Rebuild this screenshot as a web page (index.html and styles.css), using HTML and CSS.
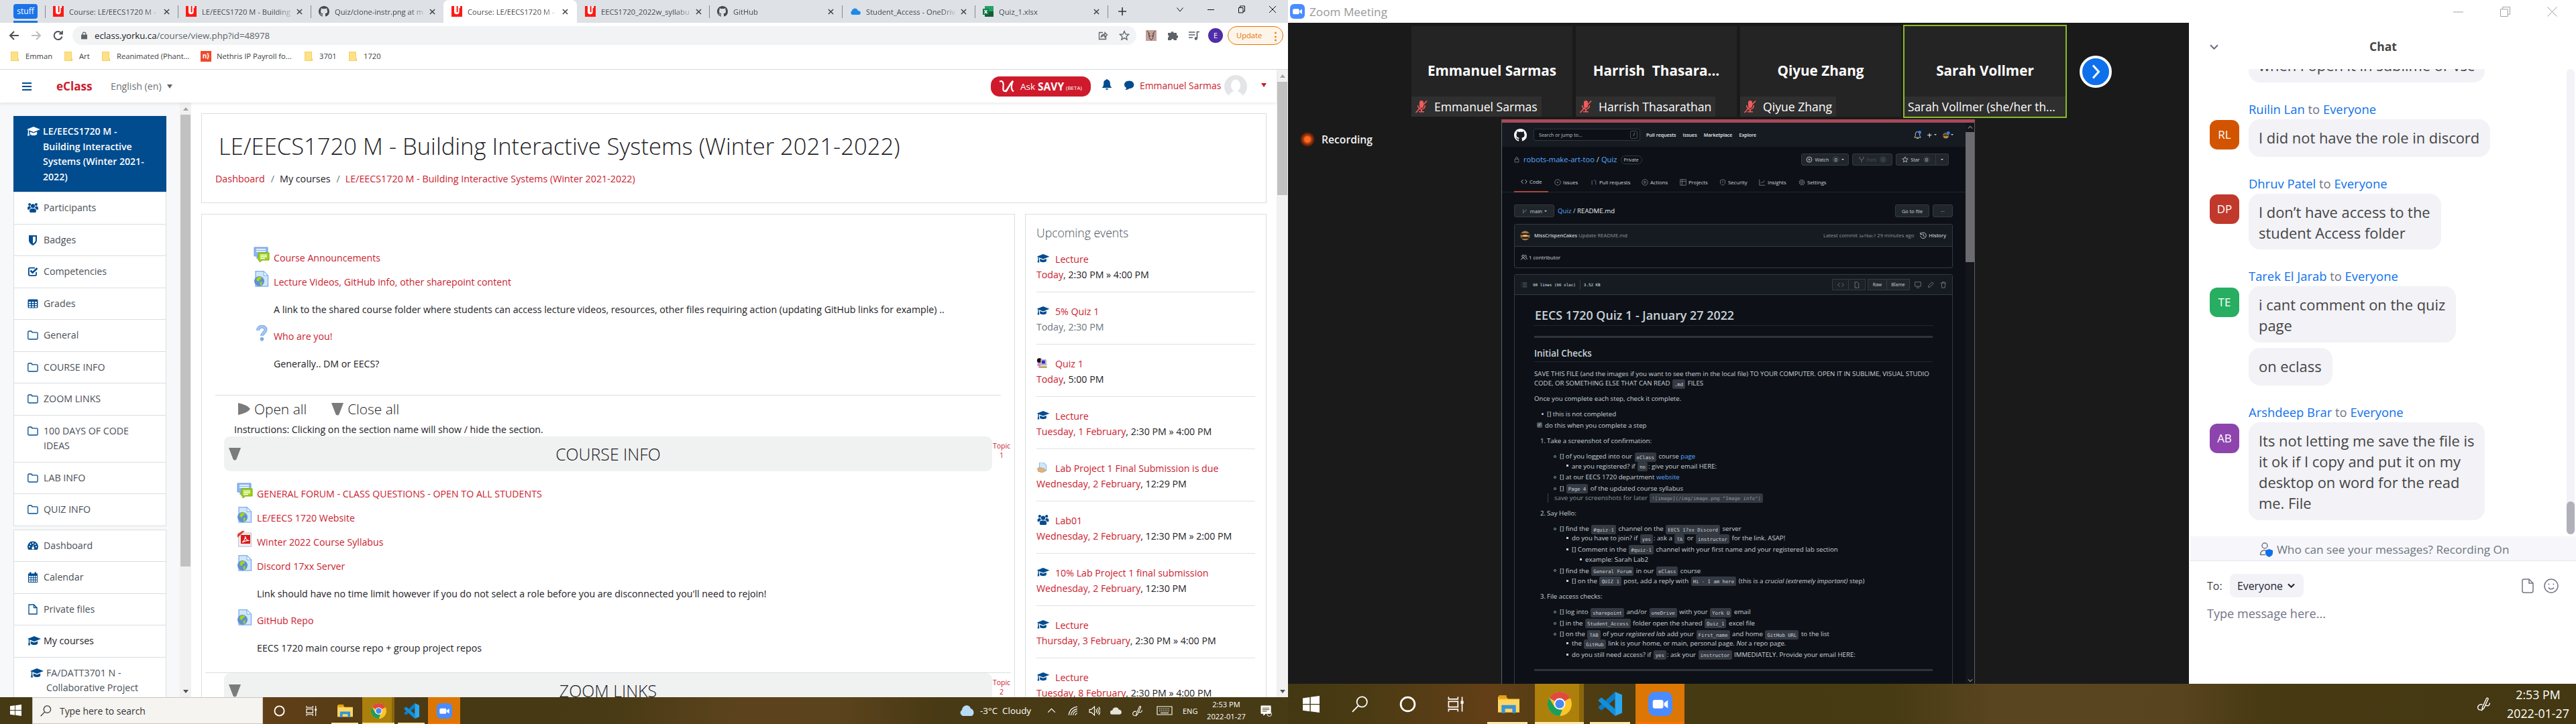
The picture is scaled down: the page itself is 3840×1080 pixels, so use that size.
FILE: index.html
```html
<!DOCTYPE html>
<html lang="en">
<head>
<meta charset="utf-8">
<title>Course: LE/EECS1720 M</title>
<link rel="stylesheet" href="styles.css">
</head>
<body>
<svg class="defs" aria-hidden="true">
  <symbol id="york" viewBox="0 0 16 16"><rect width="16" height="16" fill="#fb1b16"/><path d="M4 0v8.5a3.8 3.8 0 0 0 7.6 0V3H13V0H9.6v8.5a1 1 0 0 1-2 0V0z" fill="#fff"/></symbol>
  <symbol id="github" viewBox="0 0 16 16"><path fill="currentColor" d="M8 0C3.58 0 0 3.58 0 8c0 3.54 2.29 6.53 5.47 7.59.4.07.55-.17.55-.38 0-.19-.01-.82-.01-1.49-2.01.37-2.53-.49-2.69-.94-.09-.23-.48-.94-.82-1.13-.28-.15-.68-.52-.01-.53.63-.01 1.08.58 1.23.82.72 1.21 1.87.87 2.33.66.07-.52.28-.87.51-1.07-1.78-.2-3.64-.89-3.64-3.95 0-.87.31-1.59.82-2.15-.08-.2-.36-1.02.08-2.12 0 0 .67-.21 2.2.82a7.6 7.6 0 0 1 4 0c1.53-1.04 2.2-.82 2.2-.82.44 1.1.16 1.92.08 2.12.51.56.82 1.27.82 2.15 0 3.07-1.87 3.75-3.65 3.95.29.25.54.73.54 1.48 0 1.07-.01 1.93-.01 2.2 0 .21.15.46.55.38A8 8 0 0 0 16 8c0-4.42-3.58-8-8-8z"/></symbol>
  <symbol id="x" viewBox="0 0 10 10"><path d="M1 1l8 8M9 1L1 9" stroke="currentColor" stroke-width="1.6"/></symbol>
  <symbol id="folder" viewBox="0 0 12 14"><path d="M0 0h11v10l1 .5V14H0z" fill="#f3cf5b"/><path d="M.8.8h9.4v12.4H.8z" fill="#fee086"/></symbol>
  <symbol id="cap" viewBox="0 0 20 16"><path fill="currentColor" d="M10 1l10 4-10 4L3.2 6.3v3.2l.8 5H1l.8-5V5.7L0 5zM4.8 8.4L10 10.5l5.2-2.1v3.8c-1.5 2.4-8.9 2.4-10.4 0z"/></symbol>
  <symbol id="users" viewBox="0 0 18 16"><path fill="currentColor" d="M3.5 0a2.3 2.3 0 1 1 0 4.6 2.3 2.3 0 0 1 0-4.6zm11 0a2.3 2.3 0 1 1 0 4.6 2.3 2.3 0 0 1 0-4.6zM9 1.500a3.4 3.4 0 1 1 0 6.800A3.400 3.400 0 0 1 9 1.500zM0 8.500C0 6 1.500 5.200 4.500 5.300 4.800 7 5.500 8 6 8.500 4 8.500 3 10 3 11H1C.3 11 0 10.500 0 9.500zm18 0c0-2.500-1.500-3.300-4.500-3.200C13.200 7 12.500 8 12 8.500c2 0 3 1.500 3 2.500h2c.7 0 1-.5 1-1.500zM3.500 13c0-3 1.500-4 5.500-4s5.500 1 5.500 4c0 2-.5 3-2 3h-7c-1.500 0-2-1-2-3z"/></symbol>
  <symbol id="shield" viewBox="0 0 16 16"><path fill="currentColor" fill-rule="evenodd" d="M2 1h12v7c0 4-3 6.500-6 8-3-1.500-6-4-6-8zm6 2v10.500c2-1.200 4-3 4-5.500V3z"/></symbol>
  <symbol id="check" viewBox="0 0 16 16"><path fill="none" stroke="currentColor" stroke-width="1.800" d="M13 9v3.500c0 1-.7 1.600-1.600 1.600H3.500c-.9 0-1.600-.7-1.600-1.600V4.200c0-1 .7-1.600 1.600-1.600H11"/><path fill="none" stroke="currentColor" stroke-width="2.600" d="M4.500 6.500l3 3.200L14.500 3"/></symbol>
  <symbol id="table" viewBox="0 0 16 16"><path fill="currentColor" fill-rule="evenodd" d="M2 1.500h12a1.500 1.500 0 0 1 1.500 1.500v10a1.500 1.500 0 0 1-1.500 1.500H2A1.500 1.500 0 0 1 .5 13V3A1.500 1.500 0 0 1 2 1.500zM2 5v2h3V5zm4.500 0v2h3V5zM11 5v2h3V5zM2 8.200v2h3v-2zm4.500 0v2h3v-2zm4.500 0v2h3v-2zM2 11.400v2h3v-2zm4.500 0v2h3v-2zm4.500 0v2h3v-2z"/></symbol>
  <symbol id="fold" viewBox="0 0 16 16"><path fill="none" stroke="currentColor" stroke-width="1.300" d="M.8 3.500c0-1 .5-1.500 1.500-1.500h3c1 0 1.500.6 1.500 1.800h6.700c1 0 1.600.6 1.600 1.600v7c0 1-.6 1.600-1.600 1.600H2.300c-1 0-1.500-.6-1.500-1.600z"/></symbol>
  <symbol id="gauge" viewBox="0 0 16 16"><path fill="currentColor" d="M8 1.500A8 8 0 0 0 1.500 14h13A8 8 0 0 0 8 1.500z"/><g fill="#fff"><circle cx="3" cy="9.500" r="1.100"/><circle cx="4.600" cy="5.800" r="1.100"/><circle cx="8" cy="4.200" r="1.100"/><circle cx="11.400" cy="5.800" r="1.100"/><circle cx="13" cy="9.500" r="1.100"/><path d="M8.500 5.800L9 10a1.800 1.800 0 1 1-1.500 0z"/></g></symbol>
  <symbol id="cal" viewBox="0 0 16 16"><path fill="currentColor" fill-rule="evenodd" d="M1 2.500h2V.5h2.500v2h5v-2H13v2h2V16H1zM2.200 6v2.200h2.500V6zm3.500 0v2.200H8V6zM9 6v2.200h2V6zm3 0v2.200h2V6zM2.200 9.200v2.200h2.500V9.200zm3.500 0v2.200H8V9.200zm3.300 0v2.200h2V9.200zm3 0v2.200h2V9.200zm-9.800 3.200V15h2.500v-2.600zm3.500 0V15H8v-2.600zm3.300 0V15h2v-2.600zm3 0V15h2v-2.600z"/></symbol>
  <symbol id="file" viewBox="0 0 16 16"><path fill="none" stroke="currentColor" stroke-width="1.300" d="M2 1h7.500L14 5.500V15H2zM9.500 1v4.500H14"/></symbol>
  <symbol id="forum" viewBox="0 0 24 24"><path d="M1 1h20v13H8l-3 4v-4H1z" fill="#8db7f0" stroke="#6d9be0"/><path d="M4 4h14M4 7h14" stroke="#fff" stroke-width="1.500"/><path d="M7 9h16v11H13l-4 3v-3H7z" fill="#a2d314" stroke="#78ab0a"/><path d="M10 12.500h10M10 15h10M10 17.500h7" stroke="#fff" stroke-width="1.300"/></symbol>
  <symbol id="url" viewBox="0 0 24 24"><path d="M3 .7h12l6.500 6.500v16H3z" fill="#cfe6fb" stroke="#7daeea" stroke-width="1.300"/><path d="M15 .7v6.500h6.500z" fill="#eef7ff" stroke="#7daeea"/><circle cx="8.500" cy="15.500" r="7.500" fill="#5f8fd4"/><path d="M6 9.500l5-1 1 3-3 2-2 3-3-3zM9.500 17l3.500-1-1 5-2 1z" fill="#a4d514"/></symbol>
  <symbol id="pdf" viewBox="0 0 24 24"><path d="M2.500 3h19v20.500h-19z" fill="#ececef" stroke="#c4c4ca"/><path d="M6 6h14v13H6z" fill="#d91b1b"/><path d="M1 5l7-5h4L1 10z" fill="#e33b2c"/><path d="M8 17c3-2 5-6 4.500-9 1 5 3 6.500 6 6.500-4-.5-7 .3-10.500 2.500z" fill="none" stroke="#fff" stroke-width="1.100"/></symbol>
  <symbol id="choice" viewBox="0 0 24 24"><path d="M6.500 8C6.500 .5 18 .5 18 7c0 4-5.500 5-5.500 9" fill="none" stroke="#7fa9ea" stroke-width="5"/><path d="M6.500 8C6.500 .5 18 .5 18 7c0 4-5.500 5-5.500 9" fill="none" stroke="#a9caf6" stroke-width="2.500"/><circle cx="12.500" cy="20.800" r="2.800" fill="#7fa9ea"/></symbol>
  <symbol id="tri-d" viewBox="0 0 20 20"><path d="M1 1h18l-6.500 17q-2.500 3-5 0z" fill="#7b7b7b"/></symbol>
  <symbol id="tri-r" viewBox="0 0 20 20"><path d="M1 1q14 3 18 9-4 6-18 9z" fill="#7b7b7b"/></symbol>
  <symbol id="win" viewBox="0 0 18 18"><path fill="#fff" d="M0 2.500L7.500 1.400v7.200H0zM8.500 1.300L18 0v8.600H8.500zM0 9.600h7.500v7.200L0 15.700zM8.500 9.600H18V18l-9.500-1.300z"/></symbol>
  <symbol id="mag" viewBox="0 0 18 18"><circle cx="11" cy="6.500" r="5.500" fill="none" stroke="currentColor" stroke-width="1.300"/><path d="M7.200 10.500L.7 17.200" stroke="currentColor" stroke-width="1.300"/></symbol>
  <symbol id="ring" viewBox="0 0 18 18"><circle cx="9" cy="9" r="7.500" fill="none" stroke="#fff" stroke-width="2"/></symbol>
  <symbol id="tv" viewBox="0 0 18 18"><path fill="none" stroke="#fff" stroke-width="1.200" d="M1 1v2.500h10V1M1 17v-2.500h10V17M1 6h10v6H1zM15.500 1v16"/><path d="M14 5.500h3v3h-3z" fill="#fff"/></symbol>
  <symbol id="explorer" viewBox="0 0 24 20"><path d="M0 1.500h9L11 4h13v15H0z" fill="#f9c936"/><path d="M1 0h8.500v4H1z" fill="#e6a117"/><path d="M0 5h24v14H0z" fill="#fdd663"/><path d="M4 11h16v9h-4v-5H8v5H4z" fill="#3693d8"/></symbol>
  <symbol id="chrome" viewBox="0 0 24 24"><circle cx="12" cy="12" r="12" fill="#f9c52d"/><path d="M12 12L1.600 6A12 12 0 0 1 22.400 6z" fill="#de4b3e"/><path d="M12 24A12 12 0 0 1 1.600 6l5.200 9L12 17.400l2.500 1z" fill="#1d9d5a"/><path d="M12 6.600h10.700L22.400 6 12 5z" fill="#de4b3e"/><circle cx="12" cy="12" r="5.600" fill="#fff"/><circle cx="12" cy="12" r="4.400" fill="#4a89f3"/></symbol>
  <symbol id="code" viewBox="0 0 24 24"><path d="M17 0l7 3v18l-7 3z" fill="#2aa9f2"/><path d="M17 0v7L3.500 18.500.5 16V15z" fill="#0b7dc8"/><path d="M17 24v-7L3.500 5.500.5 8v1z" fill="#108fdb"/></symbol>
  <symbol id="zoom" viewBox="0 0 24 24"><rect width="24" height="24" rx="6.500" fill="#4a8cff"/><rect x="4.500" y="8" width="10.500" height="8.500" rx="2" fill="#fff"/><path d="M15.800 11l3.700-2.700v8l-3.700-2.700z" fill="#fff"/></symbol>
  <symbol id="pen" viewBox="0 0 20 22"><path fill="none" stroke="#fff" stroke-width="1.400" d="M8 16l6-13c.8-1.600 3.300-.6 2.500 1L10.500 17 7.500 20zM8 12c-5-1-8 3-6.500 6 1 2.500 5 2 5 2M13 13c3 2 6 0 6-3.500"/></symbol>
  <symbol id="mic" viewBox="0 0 20 20"><g fill="#f15b5b"><rect x="7" y="1" width="6" height="11" rx="3"/><path d="M4 8h1.500c0 7 9 7 9 0H16c0 4-2 6-5 6.500V17h3v1.500H6V17h3v-2.500C6 14 4 12 4 8z"/></g><path d="M1.500 19L18 1.500" stroke="#f15b5b" stroke-width="1.800"/></symbol>
</svg>

<section class="screen">
  <div class="tabs">
    <div class="group"><span>stuff</span></div>
    <div class="tab"><svg><use href="#york"/></svg><b>Course: LE/EECS1720 M -</b><svg class="cl"><use href="#x"/></svg></div>
    <div class="tab"><svg><use href="#york"/></svg><b>LE/EECS1720 M - Building</b><svg class="cl"><use href="#x"/></svg></div>
    <div class="tab"><svg><use href="#github"/></svg><b>Quiz/clone-instr.png at m</b><svg class="cl"><use href="#x"/></svg></div>
    <div class="tab on"><svg><use href="#york"/></svg><b>Course: LE/EECS1720 M -</b><svg class="cl"><use href="#x"/></svg></div>
    <div class="tab first"><svg><use href="#york"/></svg><b>EECS1720_2022w_syllabu</b><svg class="cl"><use href="#x"/></svg></div>
    <div class="tab"><svg><use href="#github"/></svg><b>GitHub</b><svg class="cl"><use href="#x"/></svg></div>
    <div class="tab"><svg viewBox="0 0 16 16"><path d="M3 13a3.500 3.500 0 0 1 0-6c1-4 7-5 9 0 5 0 5 6 1 6z" fill="#1a8be8"/></svg><b>Student_Access - OneDriv</b><svg class="cl"><use href="#x"/></svg></div>
    <div class="tab"><svg viewBox="0 0 16 16"><path d="M3 0h13v16H3z" fill="#21a366"/><path d="M9 8h7v8H3v-4z" fill="#185c37"/><path d="M0 4h9v9H0z" fill="#107c41"/><path d="M2.500 6l4 5M6.500 6l-4 5" stroke="#fff" stroke-width="1.400"/></svg><b>Quiz_1.xlsx</b><svg class="cl"><use href="#x"/></svg></div>
    <div class="tabend"><svg viewBox="0 0 12 12"><path d="M6 0v12M0 6h12" stroke="#333" stroke-width="1.600"/></svg></div>
    <div class="winbtns">
      <svg viewBox="0 0 12 12"><path d="M1.500 3.500L6 9l4.500-5.500"/></svg>
      <svg viewBox="0 0 12 12"><path d="M1 6.500h10"/></svg>
      <svg viewBox="0 0 12 12"><path d="M1.500 3.500h6.500v7.500H1.500zM3.500 3.500v-2.500h7v8H8"/></svg>
      <svg viewBox="0 0 12 12"><path d="M1 1l10 10M11 1L1 11"/></svg>
    </div>
  </div>
  <div class="address">
    <svg class="nv" viewBox="0 0 16 16"><path d="M15 8H2M8 2L2 8l6 6" /></svg>
    <svg class="nv dim" viewBox="0 0 16 16"><path d="M1 8h13M8 2l6 6-6 6"/></svg>
    <svg class="nv" viewBox="0 0 16 16"><path d="M13.500 9.500A6 6 0 1 1 12.500 4.500M13.800 1v4.500H9.300"/></svg>
    <div class="url"><svg class="lock" viewBox="0 0 10 12"><path d="M0 4.500h10V12H0z" fill="#5f6368"/><path d="M2.500 5V3a2.500 2.500 0 0 1 5 0v2" fill="none" stroke="#5f6368" stroke-width="1.400"/></svg><span>eclass.yorku.ca<i>/course/view.php?id=48978</i></span>
      <svg class="ui" viewBox="0 0 16 16"><path d="M8 3.500H2.500v10h10V9M5.500 10C6 7 8 6 11 6V3.500L14.500 7 11 10.500V8c-2.500 0-4 .5-5.500 2z"/></svg>
      <svg class="ui" viewBox="0 0 16 16"><path d="M8 1.500l1.900 4.400 4.700.4-3.600 3.100 1.100 4.700L8 11.600l-4.100 2.500L5 9.400 1.400 6.300l4.700-.4z"/></svg>
    </div>
    <div class="ext">
      <svg viewBox="0 0 16 16"><path fill="#c4a09a" d="M0 0h16v16H0z"/><path d="M2 1l4 5M14 1l-4 5M4 4l1.500 8L8 15l2.500-3L12 4" fill="none" stroke="#53403c"/><path d="M5 8l2 1M11 8L9 9" stroke="#222"/></svg>
      <svg viewBox="0 0 16 16"><path fill="#5f6368" d="M1 4h4.500a2 2 0 1 1 4 0H14v4a2 2 0 1 1 0 3.500V15H9.800a1.900 1.900 0 0 0-3.800 0H1v-4a2 2 0 0 0 0-3.800z"/></svg>
      <svg viewBox="0 0 16 16"><path fill="none" stroke="#5f6368" stroke-width="1.700" d="M0 3h9.500M0 7h9.500M0 11h6M16 2.500h-3.500V12"/><circle cx="10.800" cy="12.500" r="2.200" fill="#5f6368"/></svg>
      <span class="ava">E</span><span class="upd">Update<i>⋮</i></span>
    </div>
  </div>
  <div class="marks">
    <span class="m1"><svg><use href="#folder"/></svg>Emman</span><span class="m2"><svg><use href="#folder"/></svg>Art</span><span class="m3"><svg><use href="#folder"/></svg>Reanimated (Phant...</span><span class="m4"><em>n}</em>Nethris IP Payroll fo...</span><span class="m5"><svg><use href="#folder"/></svg>3701</span><span class="m5"><svg><use href="#folder"/></svg>1720</span>
  </div>
  <div class="web">
    <div class="page">
      <header class="nav">
        <i class="burger"></i><strong>eClass</strong><span class="lang">English (en)</span><i class="caret"></i>
        <div class="savy"><svg viewBox="0 0 28 22"><path d="M2 3c5-3 7 3 6 8-1 6 1 9 4 7 4-3 8-14 12-16M12 20C16 15 18 8 24 2c-4 8-3 15 1 17" fill="none" stroke="#fff" stroke-width="2.400"/></svg><span>Ask</span><b>SAVY</b><small>(BETA)</small></div>
        <svg class="bell" viewBox="0 0 16 16"><path fill="currentColor" d="M8 0c.7 0 1 .5 1 1.100 3 .6 3.800 3 3.800 5.400 0 3 .7 5 2.700 6.500H.5c2-1.500 2.700-3.500 2.700-6.500C3.200 4.100 4 1.700 7 1.100 7 .5 7.300 0 8 0zM6 14h4c0 2.500-4 2.500-4 0z"/></svg>
        <svg class="bub" viewBox="0 0 16 16"><path fill="currentColor" d="M8 1.500c9 0 10.500 12 0 12.300C6 15.300 4 16 1.500 16c1.200-1 1.600-2 1.700-3.200C-2.500 9.500-.5 1.500 8 1.500z"/></svg>
        <span class="who">Emmanuel Sarmas</span>
        <svg class="user" viewBox="0 0 34 34"><circle cx="17" cy="17" r="17" fill="#e4e5e6"/><ellipse cx="17" cy="15.500" rx="7" ry="9" fill="#fff"/><path d="M6 34c1-7 5-9 11-11 6 2 10 4 11 11z" fill="#fff"/></svg>
        <i class="caret red"></i>
      </header>
      <div class="cols">
        <nav class="drawer">
          <ul class="list">
            <li class="cur"><svg><use href="#cap"/></svg><span>LE/EECS1720 M -<br>Building Interactive<br>Systems (Winter 2021-<br>2022)</span></li>
            <li><svg><use href="#users"/></svg><span>Participants</span></li>
            <li><svg><use href="#shield"/></svg><span>Badges</span></li>
            <li><svg><use href="#check"/></svg><span>Competencies</span></li>
            <li><svg><use href="#table"/></svg><span>Grades</span></li>
            <li><svg><use href="#fold"/></svg><span>General</span></li>
            <li><svg><use href="#fold"/></svg><span>COURSE INFO</span></li>
            <li><svg><use href="#fold"/></svg><span>ZOOM LINKS</span></li>
            <li><svg><use href="#fold"/></svg><span>100 DAYS OF CODE<br>IDEAS</span></li>
            <li><svg><use href="#fold"/></svg><span>LAB INFO</span></li>
            <li><svg><use href="#fold"/></svg><span>QUIZ INFO</span></li>
          </ul>
          <ul class="list">
            <li><svg><use href="#gauge"/></svg><span>Dashboard</span></li>
            <li><svg><use href="#cal"/></svg><span>Calendar</span></li>
            <li><svg><use href="#file"/></svg><span>Private files</span></li>
            <li class="dark"><svg class="w"><use href="#cap"/></svg><span>My courses</span></li>
            <li class="sub"><svg class="w"><use href="#cap"/></svg><span>FA/DATT3701 N -<br>Collaborative Project</span></li>
          </ul>
        </nav>
        <div class="sb"><i class="up"></i><b style="height:674px"></b><i class="dn"></i></div>
        <main>
          <div class="card head">
            <h1>LE/EECS1720 M - Building Interactive Systems (Winter 2021-2022)</h1>
            <p><a>Dashboard</a><i>/</i>My courses<i>/</i><a>LE/EECS1720 M - Building Interactive Systems (Winter 2021-2022)</a></p>
          </div>
          <div class="row">
            <div class="card course">
              <div class="acts top">
                <div class="act"><svg><use href="#forum"/></svg><a>Course Announcements</a></div>
                <div class="act"><svg><use href="#url"/></svg><a>Lecture Videos, GitHub info, other sharepoint content</a></div>
                <p>A link to the shared course folder where students can access lecture videos, resources, other files requiring action (updating GitHub links for example) ..</p>
                <div class="act"><svg><use href="#choice"/></svg><a>Who are you!</a></div>
                <p>Generally.. DM or EECS?</p>
              </div>
              <hr>
              <div class="toggle"><svg><use href="#tri-r"/></svg><span>Open all</span><svg><use href="#tri-d"/></svg><span>Close all</span></div>
              <div class="instr">Instructions: Clicking on the section name will show / hide the section.</div>
              <div class="topic"><div class="bar"><svg><use href="#tri-d"/></svg><h3>COURSE INFO</h3></div><span>Topic<br>1</span></div>
              <div class="acts">
                <div class="act"><svg><use href="#forum"/></svg><a>GENERAL FORUM - CLASS QUESTIONS - OPEN TO ALL STUDENTS</a></div>
                <div class="act"><svg><use href="#url"/></svg><a>LE/EECS 1720 Website</a></div>
                <div class="act"><svg><use href="#pdf"/></svg><a>Winter 2022 Course Syllabus</a></div>
                <div class="act"><svg><use href="#url"/></svg><a>Discord 17xx Server</a></div>
                <p>Link should have no time limit however if you do not select a role before you are disconnected you'll need to rejoin!</p>
                <div class="act"><svg><use href="#url"/></svg><a>GitHub Repo</a></div>
                <p>EECS 1720 main course repo + group project repos</p>
              </div>
              <hr class="wide">
              <div class="topic"><div class="bar"><svg><use href="#tri-d"/></svg><h3>ZOOM LINKS</h3></div><span>Topic<br>2</span></div>
            </div>
            <aside class="card events">
              <h5>Upcoming events</h5>
              <div class="ev"><svg><use href="#cap"/></svg><a>Lecture</a><p><a>Today</a>, 2:30 PM » 4:00 PM</p></div>
              <div class="ev gray"><svg><use href="#cap"/></svg><a>5% Quiz 1</a><p>Today, 2:30 PM</p></div>
              <div class="ev"><svg viewBox="0 0 20 16"><circle cx="4" cy="4" r="3.800" fill="#111"/><path d="M6 2h9l1 10H6z" fill="#b9b9b9"/><path d="M8 4h5v5H8z" fill="#2a2ad8"/><path d="M1 8h5v5H1z" fill="#e07be8"/><path d="M3 13h13v3H3z" fill="#b7ab6a"/></svg><a>Quiz 1</a><p><a>Today</a>, 5:00 PM</p></div>
              <div class="ev"><svg><use href="#cap"/></svg><a>Lecture</a><p><a>Tuesday, 1 February</a>, 2:30 PM » 4:00 PM</p></div>
              <div class="ev"><svg viewBox="0 0 20 16"><path d="M4 0h7l4 4v9H4z" fill="#cfe6fb" stroke="#7daeea"/><path d="M1 9l4-1 7 2 2 3-5 3-7-2z" fill="#e5b27c" stroke="#ab7a48" stroke-width=".6"/></svg><a>Lab Project 1 Final Submission is due</a><p><a>Wednesday, 2 February</a>, 12:29 PM</p></div>
              <div class="ev"><svg><use href="#users"/></svg><a>Lab01</a><p><a>Wednesday, 2 February</a>, 12:30 PM » 2:00 PM</p></div>
              <div class="ev"><svg><use href="#cap"/></svg><a>10% Lab Project 1 final submission</a><p><a>Wednesday, 2 February</a>, 12:30 PM</p></div>
              <div class="ev"><svg><use href="#cap"/></svg><a>Lecture</a><p><a>Thursday, 3 February</a>, 2:30 PM » 4:00 PM</p></div>
              <div class="ev"><svg><use href="#cap"/></svg><a>Lecture</a><p><a>Tuesday, 8 February</a>, 2:30 PM » 4:00 PM</p></div>
            </aside>
          </div>
        </main>
      </div>
    </div>
    <div class="sb"><i class="up"></i><b style="height:169px"></b><i class="dn"></i></div>
  </div>
  <footer class="bar1">
    <span class="st"><svg><use href="#win"/></svg></span>
    <div class="search"><svg><use href="#mag"/></svg>Type here to search</div>
    <span class="t"><svg><use href="#ring"/></svg></span><span class="t"><svg><use href="#tv"/></svg></span>
    <span class="t run exp"><svg class="big"><use href="#explorer"/></svg></span><span class="t run chr"><svg class="big"><use href="#chrome"/></svg></span><span class="t run"><svg class="big"><use href="#code"/></svg></span><span class="t run zm"><svg class="big"><use href="#zoom"/></svg></span>
    <div class="tray">
      <svg class="wx" viewBox="0 0 22 16"><path d="M5 16a5 5 0 0 1-1-9C5-1 15-2 17 5c6 1 6 11 0 11z" fill="#b7dcf5"/></svg><span class="wt">-3°C&nbsp; Cloudy</span>
      <svg viewBox="0 0 16 16"><path d="M3 10l5-5 5 5"/></svg>
      <svg viewBox="0 0 16 16"><path d="M2 14C3 7 7 3 14 2M5 14c1-5 4-8 9-9M8 14c.5-3.500 3-5.500 6-6M11 14c.5-1.500 1.500-2.500 3-3"/></svg>
      <svg viewBox="0 0 16 16"><path d="M1 6h2.500L8 2v12l-4.500-4H1zM10 5.500q2 2.500 0 5M12 4q3 4 0 8M14 2.500q4 5.500 0 11"/></svg>
      <svg viewBox="0 0 16 16"><path d="M3 13a3 3 0 0 1 0-6c1-5 8-5 9-1 5 0 5 7 1 7z" fill="#e6e3da" stroke="none"/></svg>
      <svg viewBox="0 0 20 22"><use href="#pen"/></svg>
      <svg class="kb" viewBox="0 0 24 14"><path d="M1 1h22v12H1z"/><path d="M4 4.500h16M4 7.500h16" stroke-dasharray="1.500 1.200"/><path d="M6 10.500h12" /></svg>
      <span class="eng">ENG</span><div class="clock">2:53 PM<br>2022-01-27</div>
      <svg class="nt" viewBox="0 0 18 18"><path d="M1 1h15v12H8l-3 3v-3H1z" fill="#fff"/><path d="M3 4.500h11M3 7h11M3 9.500h7" stroke="#4a3d17"/><circle cx="14" cy="14" r="3.500"/></svg>
    </div>
  </footer>
</section>

<section class="screen">
  <div class="ztitle"><svg><use href="#zoom"/></svg><span>Zoom Meeting</span>
    <div class="zw"><svg viewBox="0 0 16 16"><path d="M0 8.500h16"/></svg><svg viewBox="0 0 16 16"><path d="M.5 4h11.500v11.500H.5zM4 4V.5h11.500V12H12"/></svg><svg viewBox="0 0 16 16"><path d="M.5.5l15 15M15.500.5l-15 15"/></svg></div>
  </div>
  <div class="zbody">
    <div class="meeting">
      <div class="strip">
        <div class="tile"><b>Emmanuel Sarmas</b><span><svg><use href="#mic"/></svg>Emmanuel Sarmas</span></div>
        <div class="tile"><b>Harrish&nbsp; Thasara...</b><span><svg><use href="#mic"/></svg>Harrish Thasarathan</span></div>
        <div class="tile"><b>Qiyue Zhang</b><span><svg><use href="#mic"/></svg>Qiyue Zhang</span></div>
        <div class="tile act-t"><b>Sarah Vollmer</b><span class="full">Sarah Vollmer (she/her th...</span></div>
        <div class="next"><svg viewBox="0 0 48 48"><circle cx="24" cy="24" r="22" fill="#0e71eb" stroke="#fff" stroke-width="4"/><path d="M20 14.500l8.500 9.500-8.500 9.500" fill="none" stroke="#fff" stroke-width="3"/></svg></div>
      </div>
      <div class="stage">
        <div class="rec"><i></i>Recording</div>
        <div class="share">
          <div class="gh">
            <div class="ghh"><svg class="oc"><use href="#github"/></svg><span class="gs">Search or jump to...<kbd>/</kbd></span><b>Pull requests</b><b>Issues</b><b>Marketplace</b><b>Explore</b>
              <div class="ghr"><svg viewBox="0 0 12 14"><path d="M1 11h10L9.500 8V5a3.500 3.500 0 0 0-7 0v3zM4.500 12.500h3" fill="none" stroke="#d0d4da"/><circle cx="9.500" cy="2.500" r="2.500" fill="#2f81f7"/></svg><span>+</span><u></u><svg viewBox="0 0 14 14"><circle cx="6" cy="8" r="5.500" fill="#b98b4e"/><path d="M1 8h10M3 5h6" stroke="#3a2814" stroke-width="2"/><circle cx="10.500" cy="3" r="3" fill="#2f81f7"/></svg><u></u></div></div>
            <div class="repo"><svg class="i8" viewBox="0 0 12 14"><path d="M2 6h8v6.500H2zM4 6V4a2 2 0 0 1 4 0v2"/></svg><span class="rn"><a>robots-make-art-too</a> / <a>Quiz</a></span><em>Private</em>
              <div class="rb"><span class="gb w1"><svg class="i8 lt" viewBox="0 0 14 14"><circle cx="7" cy="7" r="5.500"/><circle cx="7" cy="7" r="1.500"/></svg>Watch<s>0</s><u></u></span><span class="gb w2"><svg class="i8" viewBox="0 0 14 14"><path d="M3 1v4l4 3 4-3V1M7 8v5"/></svg>Fork<s>0</s></span><span class="gb w3"><svg class="i8 lt" viewBox="0 0 16 16"><path d="M8 1.500l1.900 4.400 4.700.4-3.600 3.100 1.100 4.700L8 11.600l-4.100 2.500L5 9.400 1.400 6.300l4.700-.4z"/></svg>Star<s>0</s></span><span class="gb w4"><u></u></span></div></div>
            <div class="gtabs">
              <span><svg class="i8 lt" viewBox="0 0 14 14"><path d="M5 3L1 7l4 4M9 3l4 4-4 4"/></svg>Code</span>
              <span><svg class="i8" viewBox="0 0 14 14"><circle cx="7" cy="7" r="6"/><circle cx="7" cy="7" r="1"/></svg>Issues</span>
              <span><svg class="i8" viewBox="0 0 14 14"><path d="M3 3v9M11 12V5c0-2-2-2-4-2"/></svg>Pull requests</span>
              <span><svg class="i8" viewBox="0 0 14 14"><circle cx="7" cy="7" r="6"/><path d="M5.500 4.500L9.500 7l-4 2.500z"/></svg>Actions</span>
              <span><svg class="i8" viewBox="0 0 14 14"><path d="M1 1h12v12H1zM5 1v12M1 5h12"/></svg>Projects</span>
              <span><svg class="i8" viewBox="0 0 14 14"><path d="M7 1l5 2v4c0 3-2 5-5 6-3-1-5-3-5-6V3zM7 4v4"/></svg>Security</span>
              <span><svg class="i8" viewBox="0 0 14 14"><path d="M1 1v12h12M3 9l3-3 2 2 4-5"/></svg>Insights</span>
              <span><svg class="i8" viewBox="0 0 14 14"><circle cx="7" cy="7" r="2"/><circle cx="7" cy="7" r="5" stroke-dasharray="2.600 1.300" stroke-width="2.200"/></svg>Settings</span>
            </div>
            <div class="branch"><span class="gb bb"><svg class="i8" viewBox="0 0 14 14"><path d="M4 3v9M10 3v2c0 3-6 2-6 5"/></svg>main<u></u></span><span class="bc"><a>Quiz</a> / <strong>README.md</strong></span><span class="gb gf">Go to file</span><span class="gb dots">···</span></div>
            <div class="gbox">
              <div class="gbh commit"><svg class="av" viewBox="0 0 14 14"><circle cx="7" cy="7" r="6.500" fill="#a87a48"/><path d="M1 5h12M2 10h10" stroke="#2c1d10" stroke-width="2.500"/><path d="M4 7h6" stroke="#f3cf9b" stroke-width="2"/></svg><b>MissCrispenCakes</b>&nbsp;<span>Update README.md</span><span class="lc">Latest commit <code>1ef9dc7</code> 29 minutes ago</span><svg class="i8 lt hi" viewBox="0 0 14 14"><path d="M2 4a6 6 0 1 1-1 4M1 1v4h4M7 4v4l3 1"/></svg><strong>History</strong></div>
              <div class="contrib"><svg class="i8 lt" viewBox="0 0 14 14"><circle cx="5" cy="4.500" r="2.500"/><path d="M1 12c0-5 8-5 8 0M9 2c3 0 3 4 1 5 2 .5 3 2 3 4"/></svg>1 contributor</div>
            </div>
            <div class="gbox fbox">
              <div class="gbh fh"><svg class="i8" viewBox="0 0 14 14"><path d="M4 3h9M4 7h9M4 11h9M1 3h1M1 7h1M1 11h1"/></svg><code>98 lines (66 sloc)</code><i></i><code>3.52 KB</code>
                <div class="ft"><span class="seg"><svg class="i8" viewBox="0 0 14 14"><path d="M5 3L1 7l4 4M9 3l4 4-4 4"/></svg></span><span class="seg"><svg class="i8" viewBox="0 0 14 14"><path d="M3 1h5l3 3v9H3z"/></svg></span><span class="seg t1">Raw</span><span class="seg t2">Blame</span><svg class="i8" viewBox="0 0 14 14"><path d="M1 1h12v9H1zM4 13h6"/></svg><svg class="i8" viewBox="0 0 14 14"><path d="M2 12l1-4 7-7 3 3-7 7z"/></svg><svg class="i8" viewBox="0 0 14 14"><path d="M1 3h12M5 3V1h4v2M3 3l1 10h6l1-10"/></svg></div></div>
              <div class="md">
                <h1>EECS 1720 Quiz 1 - January 27 2022</h1>
                <div class="thick"></div>
                <h2>Initial Checks</h2>
                <div class="r p1">SAVE THIS FILE (and the images if you want to see them in the local file) TO YOUR COMPUTER. OPEN IT IN SUBLIME, VISUAL STUDIO</div>
                <div class="r">CODE, OR SOMETHING ELSE THAT CAN READ <code>.md</code> FILES</div>
                <div class="r g">Once you complete each step, check it complete.</div>
                <div class="r g l1"><i class="dot"></i>[] this is not completed</div>
                <div class="r s l0"><i class="cb">✓</i>do this when you complete a step</div>
                <div class="r g l1"><i>1.</i>Take a screenshot of confirmation:</div>
                <div class="r g l2"><i class="o"></i>[] of you logged into our <code>eClass</code> course <a>page</a></div>
                <div class="r l3"><i class="sq"></i>are you registered? if <code>no</code>: give your email HERE:</div>
                <div class="r s l2"><i class="o"></i>[] at our EECS 1720 department <a>website</a></div>
                <div class="r s l2"><i class="o"></i>[] <code>Page 4</code> of the updated course syllabus</div>
                <div class="r quote">save your screenshots for later <code>![image](/img/image.png "Image info")</code></div>
                <div class="r g l1"><i>2.</i>Say Hello:</div>
                <div class="r g l2"><i class="o"></i>[] find the <code>#quiz-1</code> channel on the <code>EECS 17xx Discord</code> server</div>
                <div class="r l3"><i class="sq"></i>do you have to join? if <code>yes</code>: ask a <code>TA</code> or <code>instructor</code> for the link. ASAP!</div>
                <div class="r s l3"><i class="sq"></i>[] Comment in the <code>#quiz-1</code> channel with your first name and your registered lab section</div>
                <div class="r h l4"><i class="sq"></i>example: Sarah Lab2</div>
                <div class="r s l2"><i class="o"></i>[] find the <code>General Forum</code> in our <code>eClass</code> course</div>
                <div class="r h l3"><i class="sq"></i>[] on the <code>QUIZ 1</code> post, add a reply with <code>Hi - I am here</code> (this is a <em>crucial (extremely important)</em> step)</div>
                <div class="r g l1"><i>3.</i>File access checks:</div>
                <div class="r g l2"><i class="o"></i>[] log into <code>sharepoint</code> and/or <code>oneDrive</code> with your <code>York U</code> email</div>
                <div class="r s l2"><i class="o"></i>[] in the <code>Student_Access</code> folder open the shared <code>Quiz_1</code> excel file</div>
                <div class="r s l2"><i class="o"></i>[] on the <code>TAB</code> of your <em>registered lab</em> add your <code>First_name</code> and home <code>GitHub URL</code> to the list</div>
                <div class="r l3"><i class="sq"></i>the <code>GitHub</code> link is your home, or main, personal page. <em>Not</em> a repo page.</div>
                <div class="r s l3"><i class="sq"></i>do you still need access? if <code>yes</code>: ask your <code>instructor</code> IMMEDIATELY. Provide your email HERE:</div>
                <div class="thick end"></div>
              </div>
            </div>
          </div>
          <div class="gsb"><svg viewBox="0 0 10 10"><path d="M1 7l4-4 4 4"/></svg><b></b><svg viewBox="0 0 10 10"><path d="M1 3l4 4 4-4"/></svg></div>
        </div>
      </div>
    </div>
    <div class="chat">
      <div class="ch"><svg viewBox="0 0 12 8"><path d="M1 1l5 5 5-5" fill="none" stroke="#6e6e85" stroke-width="2"/></svg><b>Chat</b></div>
      <div class="feed">
        <div class="msgs">
          <div class="body cut"><p class="one">when I open it in sublime or vsc</p></div>
          <div class="msg"><i style="background:#d35400">RL</i><div class="body"><span><a>Ruilin Lan</a> to <a>Everyone</a></span><p>I did not have the role in discord</p></div></div>
          <div class="msg"><i style="background:#c0392b">DP</i><div class="body"><span><a>Dhruv Patel</a> to <a>Everyone</a></span><p>I don’t have access to the<br>student Access folder</p></div></div>
          <div class="msg"><i style="background:#27ae60">TE</i><div class="body"><span><a>Tarek El Jarab</a> to <a>Everyone</a></span><p>i cant comment on the quiz<br>page</p><p>on eclass</p></div></div>
          <div class="msg"><i style="background:#8e44ad">AB</i><div class="body"><span><a>Arshdeep Brar</a> to <a>Everyone</a></span><p>Its not letting me save the file is<br>it ok if I copy and put it on my<br>desktop on word for the read<br>me. File</p></div></div>
        </div>
        <div class="csb"><b></b></div>
      </div>
      <div class="vis"><svg viewBox="0 0 20 22"><circle cx="8" cy="5" r="4" fill="none" stroke="#747487" stroke-width="1.500"/><path d="M9 18.500H1.500c0-5 3-7 8-6.500" fill="none" stroke="#747487" stroke-width="1.500"/><path d="M14.500 10l5.500 2v4c0 3-2.500 5-5.500 6-3-1-5.500-3-5.500-6v-4z" fill="#0e71eb"/></svg>Who can see your messages? Recording On</div>
      <div class="to"><span>To:</span><b>Everyone<svg viewBox="0 0 12 8"><path d="M1 1l5 5 5-5" fill="none" stroke="#232333" stroke-width="2.200"/></svg></b>
        <div class="ti"><svg viewBox="0 0 22 22"><path d="M3 3.500C3 2 4 1 5.500 1H13l6 6v11c0 1.500-1 3-2.500 3h-11C4 21 3 20 3 18.500zM13 1v6h6"/></svg><svg viewBox="0 0 22 22"><circle cx="11" cy="11" r="10"/><path d="M7 13.500c2 3 6 3 8 0M7.500 7.500v2M14.500 7.500v2"/></svg></div></div>
      <div class="type">Type message here...</div>
    </div>
  </div>
  <footer class="bar2">
    <span class="t"><svg><use href="#win"/></svg></span><span class="t wh"><svg><use href="#mag"/></svg></span><span class="t"><svg><use href="#ring"/></svg></span><span class="t"><svg><use href="#tv"/></svg></span>
    <span class="t run exp"><svg class="big"><use href="#explorer"/></svg></span><span class="t run chr"><svg class="big"><use href="#chrome"/></svg></span><span class="t run"><svg class="big"><use href="#code"/></svg></span><span class="t run zm"><svg class="big"><use href="#zoom"/></svg></span>
    <div class="tray2"><svg viewBox="0 0 20 22"><use href="#pen"/></svg><div>2:53 PM<br>2022-01-27</div></div>
  </footer>
</section>
</body>
</html>
```
FILE: styles.css
```css
* { box-sizing: border-box; margin: 0; padding: 0; }
body { display: flex; width: 3840px; height: 1080px; overflow: hidden; font-family: "Open Sans", "Noto Sans", sans-serif; font-size: 14.2px; color: #1d2125; background: #fff; }
i { font-style: normal; }
ul { list-style: none; }
svg { display: block; flex: none; }
.defs { position: absolute; width: 0; height: 0; }
.screen { width: 1920px; height: 1080px; flex: none; display: flex; flex-direction: column; overflow: hidden; }

/* browser chrome */
.tabs { height: 34px; flex: none; background: #dee1e6; display: flex; align-items: stretch; font-size: 11.2px; color: #45484d; }
.group { width: 67px; padding: 6px 0 0 20px; }
.group span { display: block; width: 36px; height: 22px; border-radius: 4px; background: #1a73e8; box-shadow: 0 28px 0 -3px transparent; color: #fff; text-align: center; line-height: 22px; font-size: 12px; }
.group::after { content: ""; display: block; width: 36px; height: 3px; margin-top: 3px; background: #1a73e8; }
.tab { width: 198px; flex: none; display: flex; align-items: center; position: relative; padding-left: 12px; }
.tab::before { content: ""; position: absolute; left: 0; top: 8px; height: 19px; width: 1px; background: #85888d; }
.tab.on { width: 199px; background: #fff; border-radius: 8px 8px 0 0; }
.tab.on::before, .tab.first::before { display: none; }
.tab.first { width: 197px; }
.tab svg { width: 16px; height: 16px; }
.tab b { font-weight: 400; width: 140px; margin: 0 1px 0 8px; white-space: nowrap; -webkit-mask: linear-gradient(90deg, #000 112px, transparent 138px); mask: linear-gradient(90deg, #000 112px, transparent 138px); }
.tab svg.cl { width: 9px; height: 9px; color: #3c4043; }
.tabend { width: 60px; padding: 11px 0 0 16px; background: linear-gradient(#85888d, #85888d) 0 8px / 1px 19px no-repeat; }
.tabend svg { width: 12px; height: 12px; }
.winbtns { margin-left: auto; display: flex; gap: 34px; padding: 8px 17px 0 0; }
.winbtns svg { width: 12px; height: 12px; fill: none; stroke: #111; stroke-width: 1; }
.address { height: 37px; flex: none; display: flex; align-items: center; padding-left: 13px; }
.nv { width: 16px; height: 16px; margin-right: 17px; fill: none; stroke: #4c4f53; stroke-width: 2; }
.nv.dim { stroke: #babcbe; }
.url { width: 1586px; height: 28px; margin-left: -4px; border-radius: 14px; background: #f1f3f4; display: flex; align-items: center; padding: 0 10px 0 13px; font-size: 13.2px; color: #202124; }
.url span { margin: 0 auto 0 11px; }
.url i { color: #5f6368; }
.lock { width: 9px; height: 12px; }
.ui { width: 16px; height: 16px; margin-left: 16px; fill: none; stroke: #5f6368; stroke-width: 1.3; }
.ext { display: flex; align-items: center; margin-left: 14px; gap: 16px; }
.ext svg { width: 16px; height: 16px; }
.ava { width: 22px; height: 22px; border-radius: 50%; background: #512da8; color: #fff; text-align: center; font-size: 11px; line-height: 22px; margin-left: -3px; }
.upd { width: 83px; height: 28px; border: 1px solid #e37400; border-radius: 14px; background: #fef5ea; color: #e37400; font-size: 11.2px; line-height: 26px; padding-left: 12px; margin-left: -9px; display: flex; }
.upd i { font-weight: 700; font-size: 15px; margin-left: 13px; }
.marks { height: 33px; flex: none; border-bottom: 1px solid #d5d7da; display: flex; align-items: flex-start; padding: 4px 0 0 16px; font-size: 11.2px; line-height: 18px; color: #3c4043; }
.marks span { display: flex; align-items: center; height: 18px; }
.marks svg { width: 12px; height: 14px; margin-right: 10px; }
.marks em { width: 16px; height: 16px; background: #f0492a; color: #fff; font: 700 10px/15px "Open Sans", sans-serif; text-align: center; margin-right: 8px; }
.m1 { width: 80px; } .m2 { width: 56px; } .m3 { width: 147px; } .m4 { width: 155px; } .m5 { width: 66px; }

/* eClass page */
.web { flex: 1; display: flex; min-height: 0; overflow: hidden; }
.page { width: 1903px; display: flex; flex-direction: column; }
.nav { height: 49px; flex: none; display: flex; align-items: center; padding-left: 33px; box-shadow: 0 2px 4px rgba(0,0,0,.08); position: relative; z-index: 1; background: #fff; }
.burger { width: 14px; height: 12px; border-top: 2px solid #004c8f; border-bottom: 2px solid #004c8f; background: linear-gradient(#004c8f, #004c8f) 0 3px / 14px 2px no-repeat; }
.nav strong { margin-left: 37px; width: 81px; font-size: 17.1px; color: #cb1c2e; }
.lang { color: #6d7277; width: 84px; }
.caret { border: 4px solid transparent; border-top: 6px solid #5f6368; border-bottom: 0; }
.caret.red { border-top-color: #cb1c2e; margin-left: 21px; }
.savy { width: 149px; height: 30px; margin-left: auto; border-radius: 13px; background: #cf1a2c; color: #fff; display: flex; align-items: center; padding-left: 10px; font-size: 13.5px; white-space: nowrap; }
.savy svg { width: 28px; height: 20px; margin-right: 6px; }
.savy b { font-size: 15.5px; margin: 0 3px 0 4px; }
.savy small { font-size: 8px; margin-top: 4px; }
.bell { width: 16px; height: 16px; color: #004c8f; margin: -6px 17px 0 16px; }
.bub { width: 17px; height: 15px; color: #004c8f; margin: -4px 7px 0 0; }
.who { color: #cb1c2e; font-size: 13.9px; width: 126px; margin-top: -2px; }
.user { width: 34px; height: 34px; }
.nav .red { margin-right: 15px; margin-top: -4px; }
.cols { flex: 1; display: flex; min-height: 0; }
.drawer { width: 268px; background: #f7f8fa; padding: 20px 0 0 20px; overflow: hidden; }
.list { width: 228px; margin-bottom: 5px; }
.list li { border: 1px solid #dadde0; border-bottom: 0; background: #fff; padding: 12px 0 12px 20px; display: flex; line-height: 22.5px; color: #495057; font-size: 14.2px; white-space: nowrap; }
.list li:last-child { border-bottom: 1px solid #dadde0; }
.list svg { width: 16px; height: 16px; margin: 3px 8px 0 0; color: #004c8f; }
.list svg.w, .cur svg { width: 20px; margin-right: 4px; }
.list .cur svg { width: 20px; margin-right: 4px; color: #fff; }
.list .cur { background: #004c8f; border-color: #004c8f; color: #fff; font-weight: 600; font-size: 14.1px; padding: 11px 0 11px 19px; line-height: 22.5px; }
.list .sub { padding-left: 24px; }
.list .dark { color: #1d2125; }
.sb { width: 17px; flex: none; background: #f1f1f1; display: flex; flex-direction: column; align-items: center; padding: 7px 0 6px; }
.sb b { width: 15px; background: #c1c1c1; margin-top: 6px; }
.sb i { border: 4px solid transparent; }
.sb .up { border-bottom: 5px solid #a3a3a3; border-top: 0; }
.sb .dn { border-top: 5px solid #505050; border-bottom: 0; margin-top: auto; }
main { padding: 16px 15px 0; width: 1618px; }
.card { border: 1px solid #dadde0; background: #fff; }
.head { height: 134px; padding: 18px 0 0 20px; }
.head h1 { font-size: 34.6px; font-weight: 300; line-height: 60px; padding-left: 5px; color: #1d2125; }
.head p { font-size: 14.3px; line-height: 22px; margin-top: 8px; }
.head p i { color: #6c757d; margin: 0 8px 0 9px; }
a { color: #cb1c2e; text-decoration: none; }
.row { display: flex; justify-content: space-between; margin-top: 16px; height: 740px; }
.course { width: 1213px; height: 740px; }
.acts { padding: 15px 0 15px 52px; }
.acts.top { padding: 46px 0 25px 77px; }
.act { height: 36px; display: flex; align-items: center; }
.act svg { width: 24px; height: 24px; margin: -8px 6px 0 0; }
.acts p { height: 45px; line-height: 22px; padding: 13px 0 0 30px; }
.course hr { border: 0; border-top: 1px solid #dadde0; margin: 0 20px; }
.course hr.wide { margin: 0 5px; }
.toggle { height: 40px; display: flex; align-items: center; padding-left: 53px; font-size: 20.9px; font-weight: 300; }
.toggle svg { width: 20px; height: 20px; margin-right: 5px; }
.toggle span { margin-right: 36px; }
.instr { line-height: 22px; height: 21px; padding-left: 48px; }
.topic { display: flex; padding-left: 33px; }
.bar { width: 1145px; height: 52px; border-radius: 9px; background: #f0f2f2; display: flex; align-items: center; padding-left: 6px; }
.bar svg { width: 20px; height: 20px; }
.bar h3 { flex: 1; text-align: center; font-weight: 300; font-size: 24.9px; padding-right: 26px; }
.topic > span { width: 28px; font-size: 10.5px; line-height: 13.5px; color: #cb1c2e; text-align: center; padding-top: 8px; }
.events { width: 360px; height: 740px; padding: 15px 16px 0; }
.events h5 { font-size: 17.6px; font-weight: 300; color: #495057; line-height: 24px; margin-bottom: 16px; }
.ev { height: 78px; border-bottom: 1px solid #dfe1e4; padding-top: 17px; line-height: 23px; white-space: nowrap; }
.ev:first-of-type { margin-top: -17px; }
.ev svg { width: 20px; height: 15px; display: inline-block; vertical-align: -1px; color: #004c8f; margin-right: 8px; }
.gray p { color: #6c757d; }

/* taskbars */
.bar1 { height: 40px; flex: none; display: flex; align-items: stretch; color: #fff; background: linear-gradient(90deg, #453a14 0 48px, #623f17 392px, #593d16 490px, #473913 680px, #473a14 900px, #5c431d 1100px, #5b431d 1250px, #483a14 1400px, #473b15); }
.bar1 svg { width: 17px; height: 17px; }
.st { width: 48px; padding: 11px 0 0 15px; }
.search { width: 344px; background: #f6f4f0; border: 1px solid #c9c6bd; display: flex; align-items: center; font-size: 13.9px; color: #333; }
.bar1 .search svg { margin: 0 12px 0 11px; }
.t { display: flex; align-items: center; justify-content: center; width: 48px; flex: none; }
.bar1 .big { width: 23px; height: 23px; }
.bar1 .run { width: 50px; padding-top: 1px; background: linear-gradient(#ffe9a8, #ffe9a8) center 38px / 40px 2px no-repeat; }
.bar1 .exp { width: 52px; }
.bar1 .chr { width: 48px; background: linear-gradient(#ffe9a8, #ffe9a8) 0 38px / 48px 2px no-repeat, linear-gradient(90deg, #ad7f0b 44px, #8a670c 44px); }
.bar1 .zm { width: 48px; background: linear-gradient(#ff7200, #ff7200) 0 38px / 48px 2px no-repeat, #dc7604; }
.tray { margin-left: auto; display: flex; align-items: center; padding-right: 24px; }
.tray > svg { margin-right: 15px; fill: none; stroke: #fff; stroke-width: 1.1; }
.bar1 .wx { width: 22px; height: 16px; margin-right: 9px; stroke: none; }
.wt { font-size: 13.4px; width: 98px; white-space: nowrap; }
.bar1 .kb { width: 24px; height: 14px; margin-left: 5px; }
.eng { font-size: 11px; width: 32px; }
.clock { font-size: 11.1px; line-height: 18px; text-align: center; width: 66px; margin-right: 18px; }
.bar1 .nt { margin-right: 0; stroke-width: 1; }
.bar2 { height: 60px; flex: none; display: flex; align-items: stretch; color: #fff; background: linear-gradient(90deg, #423812 0, #4b3b13 120px, #633f17 300px, #523d12 400px, #463a12 600px, #473b14 900px, #59451f 1050px, #58441f 1330px, #483a13 1450px, #433812); }
.bar2 svg { width: 25px; height: 25px; }
.bar2 .t { width: 72px; }
.bar2 .t:first-child { width: 70px; padding-right: 2px; }
.bar2 .wh { padding-left: 3px; }
.bar2 .big { width: 36px; height: 36px; }
.bar2 .run { width: 77px; background: linear-gradient(#ffe9a8, #ffe9a8) center 57px / 60px 3px no-repeat; }
.bar2 .chr { width: 73px; background: linear-gradient(#ffe9a8, #ffe9a8) 0 57px / 73px 3px no-repeat, linear-gradient(90deg, #ad7f0b 66px, #8a670c 66px); }
.bar2 .zm { width: 73px; background: linear-gradient(#ff7200, #ff7200) 0 57px / 73px 3px no-repeat, #dc7604; }
.bar2 .exp { width: 82px; padding-left: 3px; }
.bar2 .exp .big { width: 32px; height: 27px; }
.tray2 { margin-left: auto; display: flex; align-items: center; padding-right: 8px; font-size: 17.8px; line-height: 28px; text-align: center; }
.tray2 > svg { width: 21px; height: 22px; margin-right: 22px; }
.tray2 div { width: 97px; white-space: nowrap; }

/* meeting window */
.ztitle { height: 34px; flex: none; display: flex; align-items: center; padding-left: 3px; color: #999; font-size: 17.2px; }
.ztitle > svg { width: 22px; height: 22px; margin-right: 7px; }
.zw { margin-left: auto; display: flex; gap: 55px; padding-right: 28px; }
.zw svg { width: 15px; height: 15px; fill: none; stroke: #9a9a9a; }
.zbody { height: 986px; flex: none; display: flex; }
.meeting { width: 1343px; background: #1a1a1a; flex: none; }
.strip { height: 144px; display: flex; padding: 3px 0 0 184px; }
.tile { width: 240px; height: 135px; margin: 2px 5px 0 0; background: #242424; color: #fff; display: flex; flex-direction: column; justify-content: space-between; align-items: flex-start; }
.tile b { width: 100%; text-align: center; font-size: 20.7px; line-height: 30px; margin-top: 51px; white-space: nowrap; }
.tile span { height: 30px; background: #2f2f2f; display: flex; align-items: center; font-size: 17.6px; padding: 0 6px 0 5px; white-space: nowrap; }
.tile span svg { width: 20px; height: 20px; margin-right: 9px; }
.act-t { width: 244px; height: 139px; margin: 0 0 0 -2px; border: 2px solid #8bbb27; }
.tile .full { width: 100%; font-size: 17.3px; }
.next { padding: 46px 0 0 19px; }
.next svg { width: 48px; height: 48px; }
.stage { display: flex; height: 842px; }
.rec { width: 318px; padding: 19px 0 0 18px; color: #f3f3f3; font-size: 15.7px; font-weight: 600; line-height: 22px; display: flex; }
.rec i { width: 22px; height: 22px; border-radius: 50%; margin-right: 10px; background: radial-gradient(#ff6a1f 0 4px, #b13c10 6px, #6a2508 9px, #2a1a14 11px); }
.share { width: 706px; border: 1px solid #5a5f66; border-top: 5px solid #a84a5a; border-bottom: 0; display: flex; background: #0d1117; overflow: hidden; }
.gh { width: 691px; color: #c9d1d9; font-size: 7.7px; line-height: 12px; }
.gh a { color: #58a6ff; }
.gh svg { display: inline-block; }
.ghh { height: 36px; background: #161b22; display: flex; align-items: center; padding: 0 15px 0 18px; color: #e8ecf0; font-size: 7.1px; }
.ghh b { font-weight: 600; margin-right: 10px; }
.oc { width: 19px; height: 19px; margin-right: 10px; color: #fff; }
.gs { width: 159px; height: 18px; border: 1px solid #30363d; border-radius: 3px; background: #0d1117; padding: 0 3px 0 7px; margin-right: 9px; display: flex; align-items: center; justify-content: space-between; color: #b9c0c8; }
.gs kbd { border: 1px solid #444b54; border-radius: 2px; padding: 0 3px; font-family: inherit; height: 12px; line-height: 9px; }
.ghr { margin-left: auto; display: flex; align-items: center; }
.ghr svg { width: 11px; height: 13px; }
.ghr span { font-size: 13px; margin: 0 3px 0 9px; }
.gh u { border: 2px solid transparent; border-top: 2px solid #c9d1d9; border-bottom: 0; width: 0; height: 0; display: inline-block; }
.ghr u { margin-right: 9px; } .ghr u:last-child { margin: 0 3px 0 1px; }
.i8 { width: 10px; height: 10px; fill: none; stroke: #6e7681; stroke-width: 1.3; }
.i8.lt { stroke: #c9d1d9; }
.repo { height: 38px; display: flex; align-items: center; padding: 0 25px 0 17px; }
.repo .rn { font-size: 11.2px; margin: 0 5px 0 5px; white-space: nowrap; }
.repo em { font-style: normal; border: 1px solid #30363d; border-radius: 7px; padding: 0 4px; font-size: 6.8px; line-height: 11px; }
.rb { margin-left: auto; display: flex; }
.gb { height: 19px; border: 1px solid #343a42; background: #21262d; border-radius: 3px; display: flex; align-items: center; justify-content: center; gap: 3px; font-size: 7.2px; }
.rb .gb { height: 18px; }
.gb s { text-decoration: none; background: #30363d; border-radius: 5px; padding: 0 3px; line-height: 10px; margin-left: 2px; }
.w1 { width: 71px; margin-right: 5px; } .w2 { width: 60px; margin-right: 5px; color: #4d545d; } .w3 { width: 60px; border-radius: 3px 0 0 3px; } .w4 { width: 19px; border-radius: 0 3px 3px 0; border-left: 0; }
.gtabs { height: 30px; border-bottom: 1px solid #21262d; display: grid; grid-template-columns: 50px 54px 76px 57px 59px 59px 59px 60px; padding-left: 28px; }
.gtabs span { display: flex; align-items: center; gap: 3px; white-space: nowrap; }
.gtabs span:first-child { margin-left: -10px; padding-left: 10px; width: 51px; border-bottom: 2px solid #a8483b; height: 30px; }
.branch { display: flex; align-items: center; padding: 0 19px 0 18px; margin-top: 18px; }
.bb { width: 60px; margin-right: 5px; font-size: 7.8px; }
.bc { font-size: 9.7px; } .bc strong { font-weight: 400; color: #e8ecf0; }
.gf { width: 51px; margin-left: auto; font-size: 7.4px; } .dots { width: 30px; margin-left: 5px; }
.gbox { margin: 10px 19px 0 18px; border: 1px solid #343a42; border-radius: 3px; }
.gbh { background: #161b22; border-bottom: 1px solid #343a42; display: flex; align-items: center; border-radius: 3px 3px 0 0; white-space: nowrap; }
.commit { height: 33px; padding: 0 9px 0 8px; color: #8b949e; }
.commit b { color: #c9d1d9; font-size: 7.4px; font-weight: 600; margin-left: 6px; }
.av { width: 15px; height: 15px; }
.lc { margin-left: auto; } .lc code { font-size: 6px; }
.hi { margin: 0 3px 0 9px; } .commit strong { font-weight: 400; color: #e1e6eb; }
.contrib { height: 31px; display: flex; align-items: center; padding-left: 9px; gap: 2px; }
.gh code { font-family: "DejaVu Sans Mono", "Liberation Mono", monospace; }
.fbox { margin-top: 9px; height: 640px; }
.fh { height: 30px; padding-left: 9px; }
.fh code { font-size: 5.9px; margin-left: 8px; color: #dfe4ea; }
.fh > i { width: 1px; height: 14px; background: #343a42; margin-left: 6px; }
.fh i + code { margin-left: 5px; }
.ft { margin-left: auto; display: flex; align-items: center; padding-right: 8px; font-size: 6.9px; }
.seg { width: 25px; height: 17px; border: 1px solid #343a42; background: #1c2128; display: flex; align-items: center; justify-content: center; }
.seg + .seg { border-left: 0; } .seg.t1 { margin-left: 3px; border-left: 1px solid #343a42; width: 29px; background: #21262d; } .seg.t2 { width: 34px; background: #21262d; }
.ft > svg { margin-left: 9px; }
.ft > .t2 + svg { margin-left: 7px; }
.md { padding: 18px 29px 0; font-size: 9.68px; white-space: nowrap; }
.md h1 { font-size: 17.9px; font-weight: 600; line-height: 24px; height: 28px; border-bottom: 1px solid #21262d; margin: 0 -1px; padding-left: 2px; }
.thick { height: 3px; background: #2f343c; margin: 15px 0 12px; }
.thick.end { margin: 14px 0 0; }
.md h2 { font-size: 13.4px; font-weight: 600; line-height: 20px; height: 24px; padding-top: 1px; border-bottom: 1px solid #21262d; margin-bottom: 11px; }
.r { height: 14.1px; line-height: 14.1px; }
.r.g { margin-top: 9.1px; } .r.s { margin-top: 2.5px; } .r.h { margin-top: 1px; }
.r code { background: #343942; border-radius: 2.5px; padding: 2.5px 3px; font-size: 7.3px; margin: 0 1px; }
.l1 { padding-left: 19px; } .l0 { padding-left: 16px; } .l2 { padding-left: 38px; } .l3 { padding-left: 56px; } .l4 { padding-left: 76px; }
.r i { display: inline-block; width: 10px; margin-left: -10px; }
.r i.dot, .r i.sq { width: 3px; height: 3px; background: #c9d1d9; margin: 0 5px 2px -8px; vertical-align: middle; }
.r i.dot { border-radius: 50%; }
.r i.o { width: 4px; height: 4px; border: 1px solid #8b949e; border-radius: 50%; margin: 0 5px 1px -9px; vertical-align: middle; }
.r i.cb { width: 8px; height: 8px; border-radius: 2px; background: #555b65; font-size: 7px; line-height: 8px; text-align: center; margin: 0 4px 2px -12px; vertical-align: middle; }
.quote { margin-left: 20px; padding-left: 9px; border-left: 1px solid #3b424b; color: #8b949e; }
.gsb { width: 13px; background: #14161c; display: flex; flex-direction: column; align-items: center; padding: 3px 0 1px; }
.gsb svg { width: 8px; height: 8px; fill: none; stroke: #80848a; stroke-width: 1.5; }
.gsb b { width: 13px; height: 194px; background: #6b6b70; margin: 3px 0 auto; }

/* chat */
.chat { flex: 1; display: flex; flex-direction: column; background: #fff; }
.ch { height: 69px; flex: none; display: flex; align-items: center; padding-left: 31px; color: #444; }
.ch svg { width: 13px; height: 9px; margin-top: 3px; }
.ch b { margin-left: 225px; font-size: 17.5px; }
.feed { height: 697px; flex: none; display: flex; overflow: hidden; }
.msgs { flex: 1; padding-left: 31px; margin-top: -37px; }
.msg { display: flex; margin-top: 27px; }
.msg > i { width: 44px; height: 44px; border-radius: 11px; color: #fff; font-size: 17px; line-height: 43px; text-align: center; margin: 29.5px 14px 0 0; flex: none; }
.body { display: flex; flex-direction: column; align-items: flex-start; }
.body.cut { padding-left: 58px; }
.body span { font-size: 18.4px; line-height: 25px; margin-bottom: 3px; color: #747487; }
.body a { color: #0e71eb; }
.body p { background: #f2f2f7; border-radius: 17px; padding: 12px 16px 9.7px 15px; min-height: 56px; font-size: 21.9px; line-height: 31px; color: #444; white-space: nowrap; }
.body p + p { margin-top: 8px; }
.body .one { padding-top: 16px; }
.csb { width: 12px; margin-right: 2px; background: #f2f2f7; border-radius: 6px; display: flex; align-items: flex-end; height: 694px; }
.csb b { width: 12px; height: 49px; border-radius: 6px; background: #b0b0ba; }
.vis { height: 37px; flex: none; margin-left: 2px; border-bottom: 1px solid #e4e4ec; background: #f7f7fb; display: flex; align-items: center; padding-left: 103px; color: #6e7680; font-size: 17.2px; padding-top: 3px; }
.vis svg { width: 20px; height: 22px; margin-right: 6px; }
.to { display: flex; align-items: center; padding: 0 26px 0 27px; margin-top: 19px; height: 35px; font-size: 16px; color: #444; }
.to span { width: 34px; }
.to b { width: 110px; height: 35px; border-radius: 8px; background: #f2f2f7; display: flex; align-items: center; font-weight: 400; color: #232333; padding-left: 11px; font-size: 15.8px; }
.to b svg { width: 11px; height: 8px; margin-left: 7px; }
.ti { display: flex; gap: 13px; margin-left: auto; }
.ti svg { width: 22px; height: 22px; fill: none; stroke: #747487; stroke-width: 1.5; }
.type { font-size: 18.1px; color: #747487; padding: 12px 0 0 27px; }
```
